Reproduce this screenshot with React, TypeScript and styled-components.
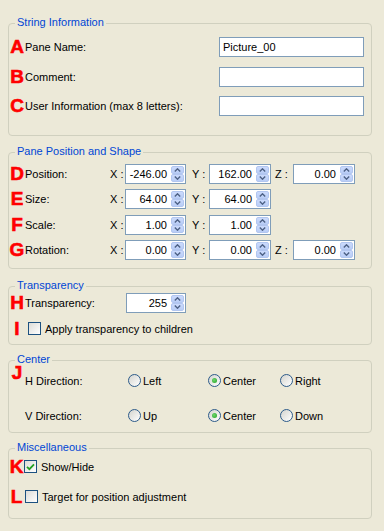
import styled, { createGlobalStyle } from 'styled-components';

const GlobalStyle = createGlobalStyle`
  body {
    margin: 0;
    background: #ece9d8;
    font-family: 'Liberation Sans', Arial, sans-serif;
    font-size: 11px;
    color: #000;
  }
`;

const Page = styled.div`
  width: 384px;
  height: 531px;
  box-sizing: border-box;
  padding: 23px 12px 0 8px;
  background: #ece9d8;
  display: flex;
  flex-direction: column;
`;

const Group = styled.section<{ $mt: number; $pt: number; $pb: number; $gap: number }>`
  position: relative;
  margin-top: ${(p) => p.$mt}px;
  border: 1px solid #d0d0bf;
  border-radius: 4px;
  padding: ${(p) => p.$pt}px 7px ${(p) => p.$pb}px 0;
  display: flex;
  flex-direction: column;
  gap: ${(p) => p.$gap}px;
`;

// sits on the group border, like a legend
const GroupTitle = styled.span`
  position: absolute;
  top: -8px;
  left: 6px;
  padding: 0 2px;
  line-height: 13px;
  background: #ece9d8;
  color: #0046d5;
`;

const Row = styled.div`
  display: flex;
  align-items: center;
  height: 20px;
`;

const Letter = styled.span<{ $w?: number; $lift?: number }>`
  width: ${(p) => p.$w ?? 16}px;
  flex: none;
  text-align: center;
  font-size: 19px;
  font-weight: bold;
  line-height: 20px;
  color: #ff0000;
  -webkit-text-stroke: 0.6px #ff0000;
  transform: translateY(${(p) => -(p.$lift ?? 0)}px);
`;

const Label = styled.span<{ $w?: number }>`
  flex: ${(p) => (p.$w ? 'none' : '1')};
  width: ${(p) => (p.$w ? `${p.$w}px` : 'auto')};
  white-space: nowrap;
`;

const TextBox = styled.div`
  width: 145px;
  height: 20px;
  box-sizing: border-box;
  border: 1px solid #7f9db9;
  background: #fff;
  padding: 0 3px;
  line-height: 18px;
`;

const Axis = styled.span<{ $w: number; $ml?: number }>`
  width: ${(p) => p.$w}px;
  margin-left: ${(p) => p.$ml ?? 0}px;
  flex: none;
  white-space: nowrap;
`;

const SpinBox = styled.div<{ $w: number }>`
  width: ${(p) => p.$w}px;
  height: 20px;
  box-sizing: border-box;
  flex: none;
  display: flex;
  align-items: stretch;
  border: 1px solid #7f9db9;
  background: #fff;
`;

const SpinValue = styled.span`
  flex: 1;
  text-align: right;
  padding-right: 4px;
  line-height: 18px;
`;

const SpinButtons = styled.div`
  width: 13px;
  margin: 1px 1px 1px 0;
  display: flex;
  flex-direction: column;
`;

const SpinButton = styled.div`
  flex: 1;
  display: flex;
  align-items: center;
  justify-content: center;
  background: linear-gradient(#cbdafc, #b9cdf6);
  border: 1px solid #b2c6f0;
  border-radius: 2px;
  box-sizing: border-box;
`;

const CheckBox = styled.span<{ $ml?: number }>`
  width: 13px;
  height: 13px;
  box-sizing: border-box;
  flex: none;
  margin-left: ${(p) => p.$ml ?? 0}px;
  margin-right: 4px;
  border: 1px solid #1c5180;
  background: linear-gradient(135deg, #dcdcd7, #ffffff);
  display: flex;
  align-items: center;
  justify-content: center;
`;

const Options = styled.div`
  display: grid;
  grid-template-columns: 80px 72px auto;
  align-items: center;
`;

const Option = styled.label`
  display: flex;
  align-items: center;
  gap: 2px;
`;

const Radio = styled.span<{ $on?: boolean }>`
  width: 13px;
  height: 13px;
  box-sizing: border-box;
  border-radius: 50%;
  border: 1px solid #2c5b8a;
  background: linear-gradient(135deg, #d4d4ce, #ffffff);
  display: flex;
  align-items: center;
  justify-content: center;
  &::after {
    content: '';
    display: ${(p) => (p.$on ? 'block' : 'none')};
    width: 5px;
    height: 5px;
    border-radius: 50%;
    background: radial-gradient(circle at 40% 40%, #6fd66f, #21a121);
  }
`;

const Arrow = ({ up }: { up?: boolean }) => (
  <svg width="7" height="4" viewBox="0 0 7 4">
    <path
      d={up ? 'M0.8 3.5 L3.5 0.8 L6.2 3.5' : 'M0.8 0.5 L3.5 3.2 L6.2 0.5'}
      fill="none"
      stroke="#4d6185"
      strokeWidth="1.4"
    />
  </svg>
);

const Spin = ({ value, w }: { value: string; w: number }) => (
  <SpinBox $w={w}>
    <SpinValue>{value}</SpinValue>
    <SpinButtons>
      <SpinButton>
        <Arrow up />
      </SpinButton>
      <SpinButton>
        <Arrow />
      </SpinButton>
    </SpinButtons>
  </SpinBox>
);

const Check = () => (
  <svg width="9" height="8" viewBox="0 0 9 8">
    <path d="M1 3.8 L3.4 6.2 L8 1.4" fill="none" stroke="#21a121" strokeWidth="1.8" />
  </svg>
);

type Coords = { letter: string; label: string; x: string; y: string; z?: string };

const coords: Coords[] = [
  { letter: 'D', label: 'Position:', x: '-246.00', y: '162.00', z: '0.00' },
  { letter: 'E', label: 'Size:', x: '64.00', y: '64.00' },
  { letter: 'F', label: 'Scale:', x: '1.00', y: '1.00' },
  { letter: 'G', label: 'Rotation:', x: '0.00', y: '0.00', z: '0.00' },
];

const App = () => {
  return (
    <>
      <GlobalStyle />
      <Page>
        <Group $mt={0} $pt={13} $pb={19} $gap={9.5}>
          <GroupTitle>String Information</GroupTitle>
          <Row>
            <Letter>A</Letter>
            <Label>Pane Name:</Label>
            <TextBox>Picture_00</TextBox>
          </Row>
          <Row>
            <Letter>B</Letter>
            <Label>Comment:</Label>
            <TextBox />
          </Row>
          <Row>
            <Letter>C</Letter>
            <Label>User Information (max 8 letters):</Label>
            <TextBox />
          </Row>
        </Group>

        <Group $mt={16} $pt={11} $pb={8} $gap={5.33}>
          <GroupTitle>Pane Position and Shape</GroupTitle>
          {coords.map((c) => (
            <Row key={c.letter}>
              <Letter>{c.letter}</Letter>
              <Label $w={85}>{c.label}</Label>
              <Axis $w={15}>X :</Axis>
              <Spin value={c.x} w={61} />
              <Axis $w={17} $ml={6}>Y :</Axis>
              <Spin value={c.y} w={62} />
              {c.z && (
                <>
                  <Axis $w={18} $ml={4}>Z :</Axis>
                  <Spin value={c.z} w={62} />
                </>
              )}
            </Row>
          ))}
        </Group>

        <Group $mt={17} $pt={6} $pb={5} $gap={6}>
          <GroupTitle>Transparency</GroupTitle>
          <Row>
            <Letter>H</Letter>
            <Label $w={101}>Transparency:</Label>
            <Spin value="255" w={60} />
          </Row>
          <Row>
            <Letter>I</Letter>
            <CheckBox $ml={3} />
            <Label>Apply transparency to children</Label>
          </Row>
        </Group>

        <Group $mt={15} $pt={10} $pb={6} $gap={15}>
          <GroupTitle>Center</GroupTitle>
          <Row>
            <Letter $lift={8}>J</Letter>
            <Label $w={103}>H Direction:</Label>
            <Options>
              <Option>
                <Radio />
                Left
              </Option>
              <Option>
                <Radio $on />
                Center
              </Option>
              <Option>
                <Radio />
                Right
              </Option>
            </Options>
          </Row>
          <Row>
            <Letter />
            <Label $w={103}>V Direction:</Label>
            <Options>
              <Option>
                <Radio />
                Up
              </Option>
              <Option>
                <Radio $on />
                Center
              </Option>
              <Option>
                <Radio />
                Down
              </Option>
            </Options>
          </Row>
        </Group>

        <Group $mt={15} $pt={8} $pb={11} $gap={10}>
          <GroupTitle>Miscellaneous</GroupTitle>
          <Row>
            <Letter $w={15}>K</Letter>
            <CheckBox>
              <Check />
            </CheckBox>
            <Label>Show/Hide</Label>
          </Row>
          <Row>
            <Letter $w={15}>L</Letter>
            <CheckBox $ml={1} />
            <Label>Target for position adjustment</Label>
          </Row>
        </Group>
      </Page>
    </>
  );
};

export default App;
